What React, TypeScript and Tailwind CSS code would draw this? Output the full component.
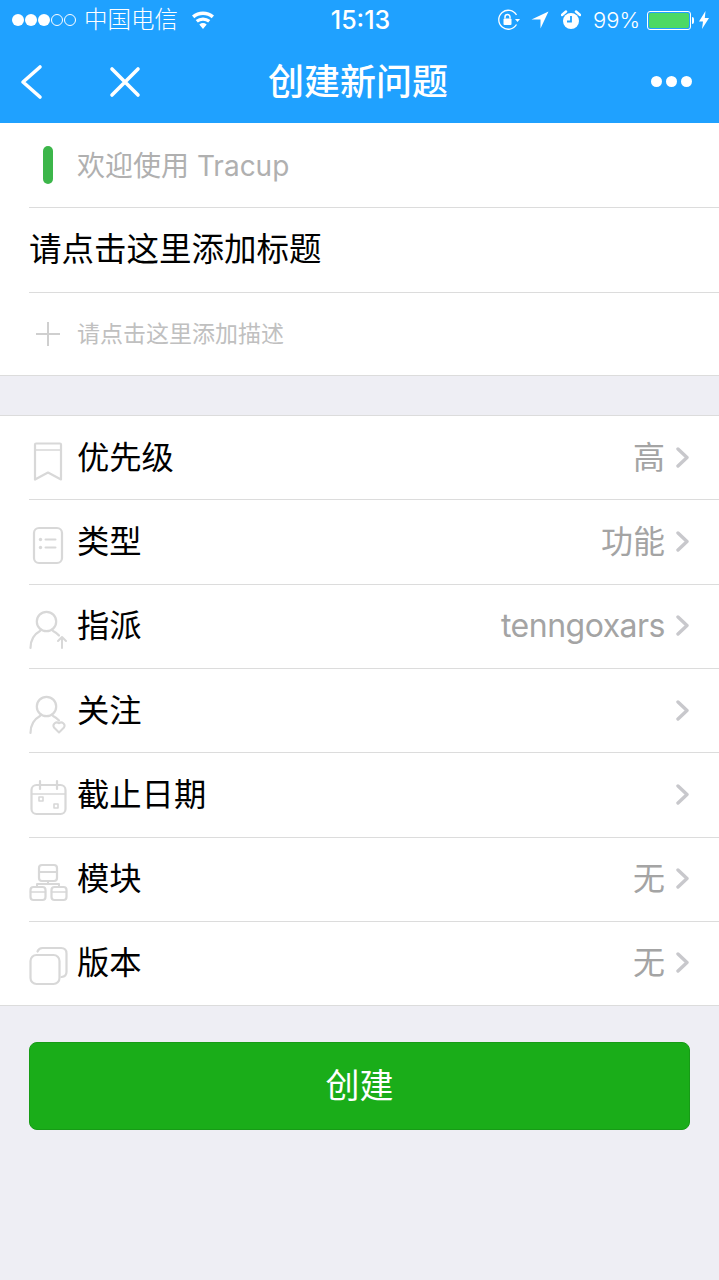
import React from 'react';

const FONT = { fontFamily: '"Inter", "Noto Sans CJK SC", sans-serif' };

const IconFrame = ({ children }: { children: React.ReactNode }) => (
  <svg className="overflow-visible" width="40" height="42" viewBox="0 0 40 42" fill="none" stroke="#d8d8d8" strokeWidth="2.2" strokeLinecap="round" strokeLinejoin="round">
    {children}
  </svg>
);

const BookmarkIcon = () => (
  <IconFrame>
    <path d="M7 6.500h24a1 1 0 0 1 1 1V42.500L19 35.500 6 42.500V7.500a1 1 0 0 1 1-1z" />
    <path d="M6 13h26" strokeWidth="1.600" />
  </IconFrame>
);

const TypeIcon = () => (
  <IconFrame>
    <rect x="5" y="7" width="28" height="35" rx="5" />
    <circle cx="11.500" cy="18.500" r="1.700" fill="#d8d8d8" stroke="none" />
    <circle cx="11.500" cy="26.500" r="1.700" fill="#d8d8d8" stroke="none" />
    <path d="M16.500 18.500h10M16.500 26.500h10" strokeWidth="2" />
  </IconFrame>
);

const PersonBase = () => (
  <>
    <circle cx="17.500" cy="16.500" r="9.700" />
    <path d="M1.500 43c0-8 4-14 9.500-17M24 26c2.500 1.200 4.500 2.700 6 4.500" />
  </>
);

const AssignIcon = () => (
  <IconFrame>
    <PersonBase />
    <path d="M33 43V32.500M29 36l4-4 4 4" strokeWidth="2" />
  </IconFrame>
);

const WatchIcon = () => (
  <IconFrame>
    <PersonBase />
    <path d="M30 42.500l-5-5a3.300 3.300 0 0 1 5-4.200 3.300 3.300 0 0 1 5 4.200z" strokeWidth="2" />
  </IconFrame>
);

const CalendarIcon = () => (
  <IconFrame>
    <rect x="2.500" y="11" width="34" height="29" rx="5" />
    <path d="M2.500 20h34" strokeWidth="1.400" />
    <path d="M11 7v8M28 7v8" />
    <rect x="10" y="23" width="4" height="4" strokeWidth="1.600" />
    <rect x="25" y="30" width="4" height="4" strokeWidth="1.600" />
  </IconFrame>
);

const ModuleIcon = () => (
  <IconFrame>
    <rect x="10" y="7" width="18" height="16" rx="3" />
    <path d="M10 14h18M19 23v3M8 29v-3h22v3" strokeWidth="2" />
    <rect x="1.500" y="29" width="15" height="13" rx="3" />
    <rect x="22.500" y="29" width="15" height="13" rx="3" />
    <path d="M1.500 34h15M22.500 34h15" strokeWidth="1.600" />
  </IconFrame>
);

const VersionIcon = () => (
  <IconFrame>
    <rect x="1.500" y="13" width="29" height="29" rx="6" />
    <path d="M8.500 9.500c1-2.500 3-3.500 5-3.500h18.500c3.500 0 5.500 2 5.500 5.500v18.500c0 2.500-1.500 4.500-5 5" />
  </IconFrame>
);

const Chevron = () => (
  <svg width="14" height="22" viewBox="0 0 14 22" fill="none" stroke="#c8c8cc" strokeWidth="3.400" strokeLinecap="round" strokeLinejoin="round">
    <path d="M2 2l9 8.500-9 8.500" />
  </svg>
);

const rows: { icon: React.ReactNode; label: string; value?: string }[] = [
  { icon: <BookmarkIcon />, label: '优先级', value: '高' },
  { icon: <TypeIcon />, label: '类型', value: '功能' },
  { icon: <AssignIcon />, label: '指派', value: 'tenngoxars' },
  { icon: <WatchIcon />, label: '关注' },
  { icon: <CalendarIcon />, label: '截止日期' },
  { icon: <ModuleIcon />, label: '模块', value: '无' },
  { icon: <VersionIcon />, label: '版本', value: '无' },
];

const StatusBar = () => (
  <div className="h-[40px] grid grid-cols-[1fr_auto_1fr] items-center pl-[12px] pr-[10px] text-white">
    <div className="flex items-center">
      <div className="flex gap-[1px] mr-[8px]">
        {[0, 1, 2].map((i) => (
          <span key={i} className="w-[12px] h-[12px] rounded-full bg-white" />
        ))}
        {[0, 1].map((i) => (
          <span key={i} className="w-[12px] h-[12px] rounded-full border border-white" />
        ))}
      </div>
      <span className="text-[23.500px] leading-none font-light">中国电信</span>
      <svg className="ml-[13px]" width="24" height="18" viewBox="0 0 24 18" fill="white">
        <path d="M12 18l-3.700-4.600a6 6 0 0 1 7.400 0zM6.800 11.500L4.700 9a11.500 11.500 0 0 1 14.600 0l-2.100 2.500a8.300 8.300 0 0 0-10.400 0zM3.300 7.200L1 4.500a17 17 0 0 1 22 0l-2.300 2.700a13.500 13.500 0 0 0-17.400 0z" />
      </svg>
    </div>
    <span className="text-[25px] leading-none font-medium">15:13</span>
    <div className="flex items-center justify-end">
      <svg width="24" height="22" viewBox="0 0 24 22" fill="none" stroke="white" strokeWidth="1.300">
        <path d="M19.500 15.500A9.500 9.500 0 1 1 19.500 6" />
        <path d="M18 10h5l-2.500 3z" fill="white" stroke="none" />
        <rect x="6.500" y="9.500" width="8" height="6.500" rx="1" fill="white" stroke="none" />
        <path d="M8 9.500V8a2.500 2.500 0 0 1 5 0v1.500" strokeWidth="1.500" />
      </svg>
      <svg className="ml-[10px]" width="18" height="18" viewBox="0 0 18 18" fill="white">
        <path d="M17.500 0.500L9.500 17.500V8.500H0.500z" />
      </svg>
      <svg className="ml-[12px]" width="20" height="20" viewBox="0 0 20 20">
        <circle cx="10" cy="11" r="8" fill="white" />
        <path d="M10 6v5.500H6" fill="none" stroke="#1fa1ff" strokeWidth="1.800" />
        <path d="M1 5l4-3.500M19 5l-4-3.500" stroke="white" strokeWidth="2.500" strokeLinecap="round" />
      </svg>
      <span className="ml-[12px] text-[22px] leading-none font-light">99%</span>
      <div className="ml-[7px] w-[44px] h-[19px] border border-white rounded-[3px] p-[1px]">
        <div className="h-full w-full rounded-[2px] bg-[#4cd964]" />
      </div>
      <span className="ml-[1px] w-[2px] h-[7px] bg-white rounded-r-sm" />
      <svg className="ml-[5px]" width="10" height="18" viewBox="0 0 10 18" fill="white">
        <path d="M6.500 0L0 10.500h4L3 18l7-11H5.800z" />
      </svg>
    </div>
  </div>
);

const NavBar = () => (
  <div className="h-[83px] grid grid-cols-[1fr_auto_1fr] items-center pl-[20px] pr-[27px]">
    <div className="flex items-center">
      <svg width="24" height="36" viewBox="0 0 24 36" fill="none" stroke="white" strokeWidth="3.600" strokeLinecap="round" strokeLinejoin="round">
        <path d="M20 3L3 18l17 15" />
      </svg>
      <svg className="ml-[65px]" width="32" height="32" viewBox="0 0 32 32" fill="none" stroke="white" strokeWidth="3.600" strokeLinecap="round">
        <path d="M3 3l26 26M29 3L3 29" />
      </svg>
    </div>
    <h1 className="ml-[4px] text-[36px] leading-none font-medium text-white">创建新问题</h1>
    <div className="flex gap-[4px] justify-end -mt-[1px]">
      {[0, 1, 2].map((i) => (
        <span key={i} className="w-[11px] h-[11px] rounded-full bg-white" />
      ))}
    </div>
  </div>
);

const App = () => (
  <div className="w-[719px] h-[1280px] overflow-hidden bg-[#eeeef4]" style={FONT}>
    <header className="h-[123px] bg-[#1fa1ff]">
      <StatusBar />
      <NavBar />
    </header>

    <section className="h-[253px] bg-white border-b border-[#dcdcdc] pl-[29px]">
      <div className="h-[85px] flex items-center border-b border-[#dcdcdc]">
        <span className="ml-[14px] w-[10px] h-[38px] rounded-full bg-[#3cb64a]" />
        <span className="ml-[24px] mt-[1px] text-[28px] leading-none text-[#b0b0b0]">欢迎使用 Tracup</span>
      </div>
      <div className="h-[85px] flex items-center border-b border-[#dcdcdc] text-[32.500px] leading-none text-black">
        请点击这里添加标题
      </div>
      <div className="h-[82px] flex items-center">
        <svg className="ml-[7px]" width="24" height="24" viewBox="0 0 24 24" stroke="#cfcfcf" strokeWidth="2">
          <path d="M12 0v24M0 12h24" />
        </svg>
        <span className="ml-[17px] text-[23px] leading-none text-[#c0c0c0]">请点击这里添加描述</span>
      </div>
    </section>

    <section className="mt-[39px] bg-white border-y border-[#dcdcdc] pl-[29px]">
      {rows.map((row, i) => (
        <div
          key={row.label}
          className={
            i < rows.length - 1
              ? 'h-[84.330px] flex items-center pr-[29px] border-b border-[#dcdcdc]'
              : 'h-[83px] flex items-center pr-[29px]'
          }
        >
          <span className="w-[48px] flex shrink-0">{row.icon}</span>
          <span className="text-[32.300px] leading-none text-black">{row.label}</span>
          {row.value && (
            <span
              className={
                row.value === 'tenngoxars'
                  ? 'ml-auto text-[32px] leading-none tracking-[-0.5px] text-[#a4a4a4]'
                  : 'ml-auto text-[32px] leading-none text-[#a4a4a4]'
              }
            >
              {row.value}
            </span>
          )}
          <span className={row.value ? 'ml-[11px] flex' : 'ml-auto flex'}>
            <Chevron />
          </span>
        </div>
      ))}
    </section>

    <div className="mt-[36px] px-[29px]">
      <button className="w-full h-[88px] rounded-[8px] bg-[#1aad19] border border-[#179b16] text-white text-[34px] leading-none">
        创建
      </button>
    </div>
  </div>
);

export default App;
